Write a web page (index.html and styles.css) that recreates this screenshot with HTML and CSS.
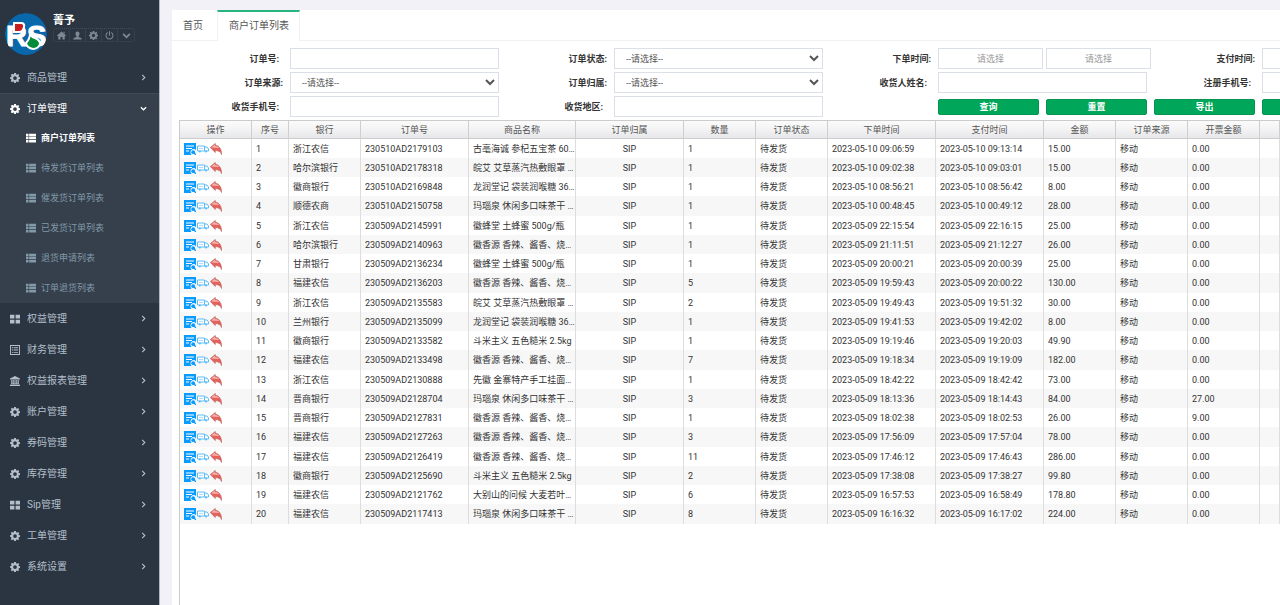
FILE: index.html
```html
<!DOCTYPE html>
<html lang="zh-CN">
<head>
<meta charset="utf-8">
<title>商户订单列表</title>
<link rel="stylesheet" href="styles.css">
</head>
<body>
<svg class="sprite" aria-hidden="true">
  <symbol id="i-cog" viewBox="0 0 16 16"><path fill-rule="evenodd" d="M6.6 0h2.8l.4 2.1 1.3.6L13 1.500 14.800 3.400 13.500 5.100l.5 1.300 2 .3v2.700l-2 .4-.6 1.300 1.300 1.800-1.900 1.900-1.800-1.200-1.300.5L9.400 16H6.600l-.4-2-1.300-.5-1.800 1.200-1.900-1.900 1.200-1.800-.5-1.300L0 9.300V6.600l2-.4.5-1.300-1.200-1.700L3.200 1.300l1.800 1.200 1.200-.5zM8 5a3 3 0 1 0 0 6 3 3 0 0 0 0-6z"/></symbol>
  <symbol id="i-grid" viewBox="0 0 16 16"><path d="M0 1h7v6H0zM9 1h7v6H9zM0 9h7v6H0zM9 9h7v6H9z"/></symbol>
  <symbol id="i-list" viewBox="0 0 16 16"><path d="M0 1h4v4H0zM5 1h11v4H5zM0 6h4v4H0zM5 6h11v4H5zM0 11h4v4H0zM5 11h11v4H5z"/></symbol>
  <symbol id="i-doc" viewBox="0 0 16 16"><path fill-rule="evenodd" d="M0 0h16v16H0zM1.500 1.500v13h13v-13zM3 3.500h2v1.500H3zM6 3.500h7v1.500H6zM3 7.200h2v1.500H3zM6 7.200h7v1.500H6zM3 11h2v1.500H3zM6 11h7v1.500H6z"/></symbol>
  <symbol id="i-bank" viewBox="0 0 16 16"><path d="M8 0l8 4v1.500H0V4zM2 6.500h2V12h1.200V6.500h2V12h1.600V6.500h2V12H12V6.500h2V12l1 1H1l1-1zM0 14h16v2H0z"/></symbol>
  <symbol id="i-home" viewBox="0 0 16 16"><path d="M8 1l8 7.200-1 1.200-1.200-1V15H9.800v-4.500H6.200V15h-4V8.400l-1.200 1-1-1.200z"/><path d="M11.500 1.500h2v4l-2-2z"/></symbol>
  <symbol id="i-user" viewBox="0 0 16 16"><path d="M8 1c2.600 0 3.800 1.700 3.600 4.200-.1 1.800-.9 3.300-1.800 4.100v1.500l4.700 1.700c.8.400 1 1.200 1 2.500H.5c0-1.300.2-2.100 1-2.500l4.700-1.700V9.300C5.300 8.500 4.500 7 4.400 5.200 4.200 2.700 5.400 1 8 1z"/></symbol>
  <symbol id="i-power" viewBox="0 0 16 16"><path fill="none" stroke="currentColor" stroke-width="1.800" stroke-linecap="round" d="M4.500 3a6.200 6.200 0 1 0 7 0M8 1v6.500"/></symbol>
  <symbol id="i-down" viewBox="0 0 16 16"><path fill="none" stroke="currentColor" stroke-width="3" d="M2 5l6 6 6-6"/></symbol>
  <symbol id="i-right" viewBox="0 0 16 16"><path fill="none" stroke="currentColor" stroke-width="2.500" d="M5 2l6 6-6 6"/></symbol>
  <symbol id="i-view" viewBox="0 0 12 12"><path fill="#0a9bff" d="M0 0h12v7.500A3 3 0 0 0 6.500 9.500c0 1 .3 1.800 1 2.500H0z"/><path stroke="#fff" stroke-width="1" d="M2 3h8M2 5.500h6M2 8h3"/><circle cx="9.200" cy="9.200" r="1.900" fill="#0a9bff"/><path stroke="#0a9bff" stroke-width="1.300" d="M10 10l2 2"/></symbol>
  <symbol id="i-truck" viewBox="0 0 12 9"><path fill="#fff" stroke="#5cbcf8" stroke-width="1" d="M.5 1.500h7v5h-7zM7.500 2.500h2.500l1.500 2v2h-4z"/><path stroke="#9bd6fb" stroke-width=".8" d="M2 4h4"/><circle cx="2.800" cy="7" r="1.100" fill="#5cbcf8"/><circle cx="9" cy="7" r="1.100" fill="#5cbcf8"/></symbol>
  <symbol id="i-back" viewBox="0 0 12 12"><path fill="#e8605c" stroke="#a9504d" stroke-width=".5" d="M.3 4.500L5.300.4v1.800c4 .3 6.300 3.800 6.300 9.400-1.300-3-3-3.900-6.300-4v2z"/><path fill="#f6b3ae" d="M1.300 4.500l3.500-2.900v1.400c2.200.1 3.500.8 4.500 1.900z"/></symbol>
</svg>
<div class="app">
  <aside class="sidebar">
    <div class="profile">
      <svg class="logo" viewBox="0 0 42 42" role="img" aria-label="RS">
        <defs><clipPath id="disc"><circle cx="21" cy="21" r="21"/></clipPath></defs>
        <g clip-path="url(#disc)">
          <circle cx="21" cy="21" r="21" fill="#0967ac"/>
          <text class="logo-letters" x="1" y="33">RS</text>
          <path fill="#c3201f" stroke="#fff" stroke-width="2" d="M9 10h8q3 1 2 4-1 5-5 5H9z"/>
          <path fill="#078b3c" stroke="#fff" stroke-width="2" d="M25 20q1 4 5 5 5 2 5 6-2 5-7 5-6-1-7-6 4-4 4-10z"/>
        </g>
      </svg>
      <div>
        <strong class="user-name">菁予</strong>
        <div class="user-tools">
          <button aria-label="主页"><svg><use href="#i-home"/></svg></button><button aria-label="用户"><svg><use href="#i-user"/></svg></button><button aria-label="设置"><svg><use href="#i-cog"/></svg></button><button aria-label="退出"><svg><use href="#i-power"/></svg></button><button aria-label="更多"><svg><use href="#i-down"/></svg></button>
        </div>
      </div>
    </div>
    <nav>
      <a class="item" href="#"><svg><use href="#i-cog"/></svg><span>商品管理</span><svg class="arrow"><use href="#i-right"/></svg></a>
      <div class="open">
        <a class="item" href="#"><svg><use href="#i-cog"/></svg><span>订单管理</span><svg class="arrow"><use href="#i-down"/></svg></a>
        <a class="sub current" href="#"><svg><use href="#i-list"/></svg>商户订单列表</a>
        <a class="sub" href="#"><svg><use href="#i-list"/></svg>待发货订单列表</a>
        <a class="sub" href="#"><svg><use href="#i-list"/></svg>催发货订单列表</a>
        <a class="sub" href="#"><svg><use href="#i-list"/></svg>已发货订单列表</a>
        <a class="sub" href="#"><svg><use href="#i-list"/></svg>退货申请列表</a>
        <a class="sub" href="#"><svg><use href="#i-list"/></svg>订单退货列表</a>
      </div>
      <a class="item" href="#"><svg><use href="#i-grid"/></svg><span>权益管理</span><svg class="arrow"><use href="#i-right"/></svg></a>
      <a class="item" href="#"><svg><use href="#i-doc"/></svg><span>财务管理</span><svg class="arrow"><use href="#i-right"/></svg></a>
      <a class="item" href="#"><svg><use href="#i-bank"/></svg><span>权益报表管理</span><svg class="arrow"><use href="#i-right"/></svg></a>
      <a class="item" href="#"><svg><use href="#i-cog"/></svg><span>账户管理</span><svg class="arrow"><use href="#i-right"/></svg></a>
      <a class="item" href="#"><svg><use href="#i-cog"/></svg><span>券码管理</span><svg class="arrow"><use href="#i-right"/></svg></a>
      <a class="item" href="#"><svg><use href="#i-cog"/></svg><span>库存管理</span><svg class="arrow"><use href="#i-right"/></svg></a>
      <a class="item" href="#"><svg><use href="#i-grid"/></svg><span>Sip管理</span><svg class="arrow"><use href="#i-right"/></svg></a>
      <a class="item" href="#"><svg><use href="#i-cog"/></svg><span>工单管理</span><svg class="arrow"><use href="#i-right"/></svg></a>
      <a class="item" href="#"><svg><use href="#i-cog"/></svg><span>系统设置</span><svg class="arrow"><use href="#i-right"/></svg></a>
    </nav>
  </aside>
  <main class="main">
    <div class="tabs"><a class="tab" href="#">首页</a><a class="tab active" href="#">商户订单列表</a><span class="tabs-rest"></span></div>
    <form class="filters">
      <div class="field"><label class="tail" for="f-no">订单号:</label><input id="f-no" type="text"></div>
      <div class="field"><label for="f-status">订单状态:</label><select id="f-status"><option>--请选择--</option></select></div>
      <div class="field wide"><label for="f-from">下单时间:</label><input id="f-from" type="text" placeholder="请选择"><input type="text" placeholder="请选择" aria-label="下单时间止"></div>
      <div class="field wide"><label for="f-pay">支付时间:</label><input id="f-pay" type="text"><input type="text" aria-label="支付时间止"></div>
      <div class="field"><label for="f-src">订单来源:</label><select id="f-src"><option>--请选择--</option></select></div>
      <div class="field"><label for="f-own">订单归属:</label><select id="f-own"><option>--请选择--</option></select></div>
      <div class="field"><label class="tail" for="f-name">收货人姓名:</label><input id="f-name" type="text"></div>
      <div class="field"><label class="tail" for="f-reg">注册手机号:</label><input id="f-reg" type="text"></div>
      <div class="field"><label class="tail" for="f-tel">收货手机号:</label><input id="f-tel" type="text"></div>
      <div class="field"><label class="tail" for="f-area">收货地区:</label><input id="f-area" type="text"></div>
      <div class="actions"><button type="button">查询</button><button type="button">重置</button><button type="button">导出</button><button type="button" aria-label="更多操作"></button></div>
    </form>
    <div class="table-wrap">
      <table>
        <colgroup><col class="w-m"><col class="w-s"><col class="w-m"><col class="w-l"><col class="w-goods"><col class="w-l"><col class="w-m"><col class="w-m"><col class="w-l"><col class="w-l"><col class="w-m"><col class="w-m"><col class="w-m"><col></colgroup>
        <thead><tr><th>操作</th><th>序号</th><th>银行</th><th>订单号</th><th>商品名称</th><th>订单归属</th><th>数量</th><th>订单状态</th><th>下单时间</th><th>支付时间</th><th>金额</th><th>订单来源</th><th>开票金额</th><th></th></tr></thead>
        <tbody id="orders"></tbody>
      </table>
    </div>
  </main>
</div>
<script src="app.js"></script>
</body>
</html>
```
FILE: styles.css
```css
* { box-sizing: border-box; }
body {
  margin: 0;
  background: #f1f1f7;
  color: #333;
  font: 9px/12px Roboto, "Noto Sans CJK SC", sans-serif;
}
a { color: inherit; text-decoration: none; }
button, input, select { font: inherit; color: inherit; margin: 0; }
.sprite { display: none; }
.app { display: flex; min-height: 100vh; overflow: hidden; }

.sidebar {
  flex: 0 0 160px;
  background: #2a3541;
  border-right: 1px solid #b5b9be;
  color: #b4bfca;
}
.sidebar svg { fill: currentColor; }
.profile { display: flex; gap: 6px; height: 62px; padding: 13px 0 0 5px; }
.logo { width: 42px; height: 42px; }
.sidebar .logo-letters {
  fill: #fff;
  stroke: #fff;
  stroke-width: 1px;
  font: bold 29px "Liberation Sans", sans-serif;
}
.user-name { display: block; color: #fff; font-size: 11px; line-height: 15px; }
.user-tools {
  display: flex;
  border: 1px dotted #414d5a;
  border-radius: 3px;
}
.user-tools button {
  display: flex;
  align-items: center;
  justify-content: center;
  width: 16px;
  height: 12px;
  padding: 0;
  border: 0;
  border-right: 1px solid #35414d;
  background: none;
  color: #7d8894;
}
.user-tools button:last-child { border-right: 0; }
.user-tools svg { width: 9px; height: 9px; }

.item {
  display: flex;
  align-items: center;
  gap: 7px;
  height: 31px;
  padding: 0 12px 0 10px;
  font-size: 10px;
}
.item svg { width: 10px; height: 10px; }
.item span { flex: 1; }
.item .arrow { width: 7px; height: 7px; }
.open { background: #35404c; border-top: 1px dotted #46525e; }
.open .item { color: #fff; height: 29px; }
.sub {
  display: flex;
  align-items: center;
  gap: 5px;
  height: 30px;
  padding-left: 26px;
  color: #8299a8;
}
.sub svg { width: 10px; height: 10px; }
.sub.current { color: #fff; font-weight: bold; }

.main {
  flex: 1;
  display: flex;
  flex-direction: column;
  min-width: 0;
  margin: 10px 0 0 12px;
  background: #fff;
  overflow: hidden;
}
.tabs { display: flex; height: 31px; }
.tab {
  padding: 8px 14px 0 11px;
  border-bottom: 1px solid #f1f1f4;
  color: #555;
  font-size: 10px;
  line-height: 16px;
}
.tab.active {
  padding: 6px 10px 0 11px;
  border: 1px solid #f1f1f4;
  border-top: 2px solid #26b47f;
  border-bottom: 0;
}
.tabs-rest { flex: 1; border-bottom: 1px solid #f1f1f4; }

.filters {
  display: grid;
  grid-template-columns: repeat(4, 324px);
  gap: 3px 0;
  padding: 7px 0 3px 7px;
}
.field { display: flex; gap: 3px; height: 21px; align-items: center; padding-right: 4px; }
.field.wide { padding-right: 0; }
.field label {
  flex: 0 0 108px;
  padding-right: 4px;
  font-weight: bold;
  text-align: right;
}
.field label.tail { padding-right: 8px; }
.field input, .field select {
  flex: 1;
  min-width: 0;
  height: 21px;
  padding: 0 7px;
  border: 1px solid #dbdfe8;
  border-radius: 0;
  background: #fff;
  color: #555;
}
.field select { padding: 0 0 0 7px; }
.field input::placeholder { color: #999; text-align: center; }
.actions {
  grid-column: span 2;
  display: grid;
  grid-template-columns: repeat(4, 101px);
  gap: 7px;
  align-items: center;
  padding-left: 111px;
}
.actions button {
  height: 16px;
  padding: 0;
  border: 1px solid #069550;
  border-radius: 2px;
  background: #00a65a;
  color: #fff;
  font-weight: bold;
  line-height: 12px;
}

.table-wrap {
  flex: 1;
  margin-left: 7px;
  border-top: 1px solid #ccc;
  border-left: 1px solid #ccc;
}
table { width: 100%; table-layout: fixed; border-collapse: separate; border-spacing: 0; }
.w-s { width: 37px; }
.w-m { width: 72px; }
.w-l { width: 108px; }
.w-goods { width: 107px; }
th {
  height: 18px;
  padding: 0;
  border-right: 1px solid #cfcfcf;
  border-bottom: 1px solid #ccc;
  background: linear-gradient(#fbfbfb, #f3f3f4 50%, #e6e7ea);
  color: #555;
  font-weight: normal;
}
td {
  height: 19px;
  padding: 0 0 0 4px;
  border-right: 1px solid #ddd;
  white-space: nowrap;
  overflow: hidden;
}
tbody tr:nth-child(4n) td { height: 20px; }
tbody tr:nth-child(even) { background: #f7f7f7; }
td.center { text-align: center; padding: 0; }
.ops { display: flex; align-items: center; gap: 1px; }
.ops a { display: flex; }
.ops svg { width: 12px; height: 12px; }
```
FILE: app.js
```js
const orders = [
  ["浙江农信", "230510AD2179103", "古亳海诚 参杞五宝茶 60…", "1", "2023-05-10 09:06:59", "2023-05-10 09:13:14", "15.00", "0.00"],
  ["哈尔滨银行", "230510AD2178318", "皖艾 艾草蒸汽热敷眼罩 …", "1", "2023-05-10 09:02:38", "2023-05-10 09:03:01", "15.00", "0.00"],
  ["徽商银行", "230510AD2169848", "龙润堂记 袋装润喉糖 36…", "1", "2023-05-10 08:56:21", "2023-05-10 08:56:42", "8.00", "0.00"],
  ["顺德农商", "230510AD2150758", "玛瑙泉 休闲多口味茶干 …", "1", "2023-05-10 00:48:45", "2023-05-10 00:49:12", "28.00", "0.00"],
  ["浙江农信", "230509AD2145991", "徽蜂堂 土蜂蜜 500g/瓶", "1", "2023-05-09 22:15:54", "2023-05-09 22:16:15", "25.00", "0.00"],
  ["哈尔滨银行", "230509AD2140963", "徽香源 香辣、酱香、烧…", "1", "2023-05-09 21:11:51", "2023-05-09 21:12:27", "26.00", "0.00"],
  ["甘肃银行", "230509AD2136234", "徽蜂堂 土蜂蜜 500g/瓶", "1", "2023-05-09 20:00:21", "2023-05-09 20:00:39", "25.00", "0.00"],
  ["福建农信", "230509AD2136203", "徽香源 香辣、酱香、烧…", "5", "2023-05-09 19:59:43", "2023-05-09 20:00:22", "130.00", "0.00"],
  ["浙江农信", "230509AD2135583", "皖艾 艾草蒸汽热敷眼罩 …", "2", "2023-05-09 19:49:43", "2023-05-09 19:51:32", "30.00", "0.00"],
  ["兰州银行", "230509AD2135099", "龙润堂记 袋装润喉糖 36…", "1", "2023-05-09 19:41:53", "2023-05-09 19:42:02", "8.00", "0.00"],
  ["徽商银行", "230509AD2133582", "斗米主义 五色糙米 2.5kg", "1", "2023-05-09 19:19:46", "2023-05-09 19:20:03", "49.90", "0.00"],
  ["福建农信", "230509AD2133498", "徽香源 香辣、酱香、烧…", "7", "2023-05-09 19:18:34", "2023-05-09 19:19:09", "182.00", "0.00"],
  ["浙江农信", "230509AD2130888", "先徽 金寨特产手工挂面…", "1", "2023-05-09 18:42:22", "2023-05-09 18:42:42", "73.00", "0.00"],
  ["晋商银行", "230509AD2128704", "玛瑙泉 休闲多口味茶干 …", "3", "2023-05-09 18:13:36", "2023-05-09 18:14:43", "84.00", "27.00"],
  ["晋商银行", "230509AD2127831", "徽香源 香辣、酱香、烧…", "1", "2023-05-09 18:02:38", "2023-05-09 18:02:53", "26.00", "9.00"],
  ["福建农信", "230509AD2127263", "徽香源 香辣、酱香、烧…", "3", "2023-05-09 17:56:09", "2023-05-09 17:57:04", "78.00", "0.00"],
  ["福建农信", "230509AD2126419", "徽香源 香辣、酱香、烧…", "11", "2023-05-09 17:46:12", "2023-05-09 17:46:43", "286.00", "0.00"],
  ["徽商银行", "230509AD2125690", "斗米主义 五色糙米 2.5kg", "2", "2023-05-09 17:38:08", "2023-05-09 17:38:27", "99.80", "0.00"],
  ["福建农信", "230509AD2121762", "大别山的问候 大麦若叶…", "6", "2023-05-09 16:57:53", "2023-05-09 16:58:49", "178.80", "0.00"],
  ["福建农信", "230509AD2117413", "玛瑙泉 休闲多口味茶干 …", "8", "2023-05-09 16:16:32", "2023-05-09 16:17:02", "224.00", "0.00"]
];

const ops = [["查看", "view"], ["发货", "truck"], ["退货", "back"]]
  .map(([label, icon]) => `<a href="#" aria-label="${label}"><svg><use href="#i-${icon}"/></svg></a>`)
  .join("");

document.getElementById("orders").innerHTML = orders.map(([bank, no, goods, count, placed, paid, amount, invoice], i) =>
  `<tr><td><div class="ops">${ops}</div></td><td>${i + 1}</td><td>${bank}</td><td>${no}</td><td>${goods}</td>` +
  `<td class="center">SIP</td><td>${count}</td><td>待发货</td><td>${placed}</td><td>${paid}</td>` +
  `<td>${amount}</td><td>移动</td><td>${invoice}</td><td></td></tr>`
).join("");
```
